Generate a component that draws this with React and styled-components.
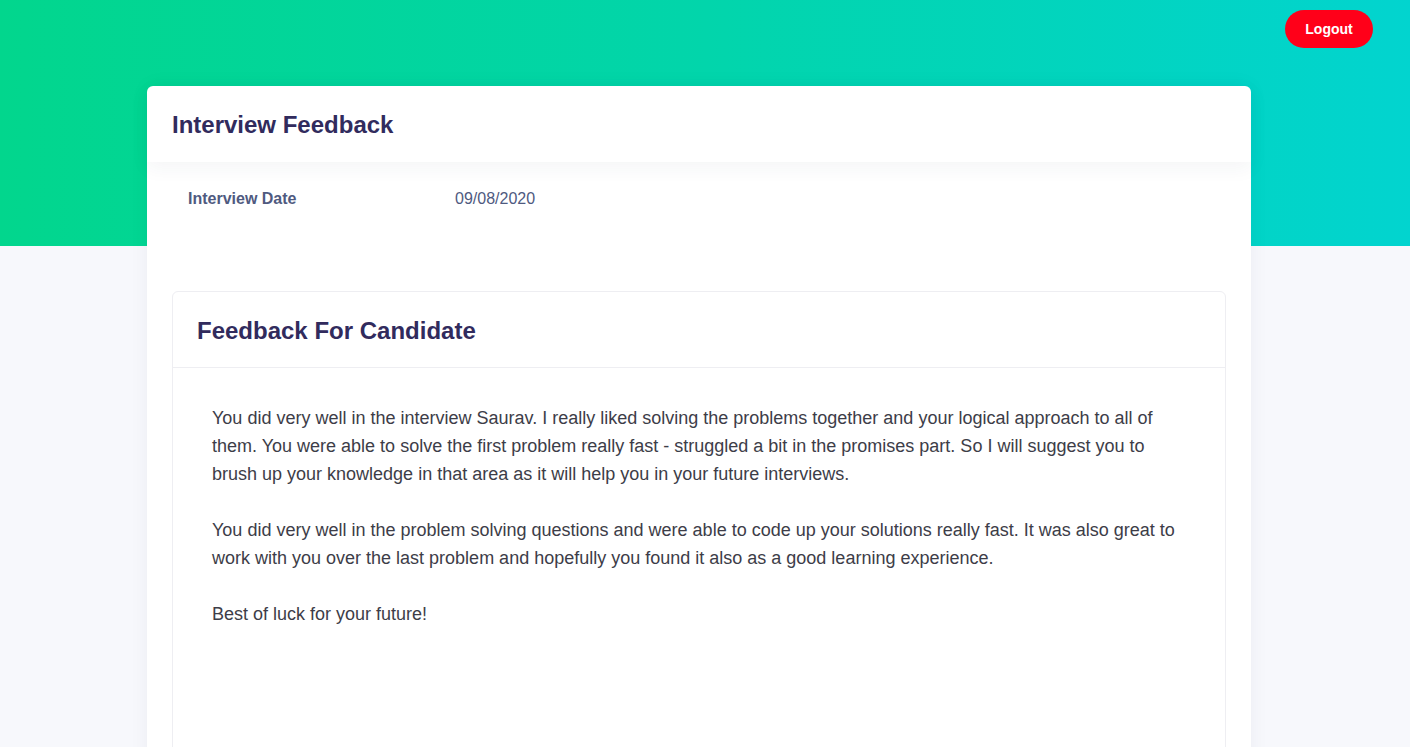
import React from "react";
import styled, { createGlobalStyle } from "styled-components";

const GlobalStyle = createGlobalStyle`
  body {
    margin: 0;
    background-color: #f7f8fc;
    font-family: "Liberation Sans", Arial, sans-serif;
  }
`;

const Page = styled.div`
  min-height: 100vh;
  background-color: #f7f8fc;
`;

const Hero = styled.div`
  height: 246px;
  background: linear-gradient(90deg, #02d68d 0%, #02d5ab 50%, #02d4cf 100%);
  display: flex;
  justify-content: flex-end;
  align-items: flex-start;
  padding: 10px 37px 0 0;
  box-sizing: border-box;
`;

const LogoutButton = styled.button`
  width: 88px;
  height: 38px;
  border: none;
  border-radius: 19px;
  background-color: #ff0019;
  color: #fff;
  font-family: "Liberation Sans", Arial, sans-serif;
  font-weight: bold;
  font-size: 14px;
  cursor: pointer;
`;

const Main = styled.div`
  margin: -160px 0 0 147px;
  width: 1104px;
`;

const Card = styled.div`
  background-color: #fff;
  border-radius: 6px;
  box-shadow: 0 0 20px rgba(30, 40, 80, 0.05);
  padding-bottom: 40px;
`;

const CardHeader = styled.div`
  height: 76px;
  box-sizing: border-box;
  display: flex;
  align-items: center;
  padding: 2px 25px 0;
  box-shadow: 0 6px 18px rgba(40, 50, 80, 0.05);
  position: relative;
`;

const Title = styled.h1`
  margin: 0;
  font-size: 24px;
  font-weight: bold;
  color: #312b5d;
  font-family: "Liberation Sans", Arial, sans-serif;
`;

const InfoRow = styled.div`
  display: flex;
  align-items: center;
  height: 72px;
  padding: 1px 41px 0;
  box-sizing: border-box;
  margin-bottom: 57px;
`;

const InfoLabel = styled.div`
  width: 267px;
  font-size: 16px;
  font-weight: bold;
  color: #4f5a7f;
`;

const InfoValue = styled.div`
  font-size: 16px;
  color: #4f5a7f;
`;

const Inner = styled.div`
  margin: 0 25px;
  border: 1px solid #eeeef2;
  border-radius: 6px;
  min-height: 520px;
`;

const InnerHeader = styled.div`
  height: 76px;
  box-sizing: border-box;
  display: flex;
  align-items: center;
  padding: 2px 24px 0;
  border-bottom: 1px solid #eeeef2;
`;

const InnerBody = styled.div`
  padding: 36px 39px;
`;

const Paragraph = styled.p`
  margin: 0 0 28px;
  font-family: "Liberation Sans", Arial, sans-serif;
  font-size: 18px;
  line-height: 28px;
  color: #3d3d48;
  font-weight: 400;
`;

const App = () => {
  return (
    <>
      <GlobalStyle />
      <Page>
        <Hero>
          <LogoutButton>Logout</LogoutButton>
        </Hero>
        <Main>
          <Card>
            <CardHeader>
              <Title>Interview Feedback</Title>
            </CardHeader>
            <InfoRow>
              <InfoLabel>Interview Date</InfoLabel>
              <InfoValue>09/08/2020</InfoValue>
            </InfoRow>
            <Inner>
              <InnerHeader>
                <Title>Feedback For Candidate</Title>
              </InnerHeader>
              <InnerBody>
                <Paragraph>
                  You did very well in the interview Saurav. I really liked solving the problems
                  together and your logical approach to all of them. You were able to solve the
                  first problem really fast - struggled a bit in the promises part. So I will
                  suggest you to brush up your knowledge in that area as it will help you in your
                  future interviews.
                </Paragraph>
                <Paragraph>
                  You did very well in the problem solving questions and were able to code up your
                  solutions really fast. It was also great to work with you over the last problem
                  and hopefully you found it also as a good learning experience.
                </Paragraph>
                <Paragraph>Best of luck for your future!</Paragraph>
              </InnerBody>
            </Inner>
          </Card>
        </Main>
      </Page>
    </>
  );
};

export default App;
